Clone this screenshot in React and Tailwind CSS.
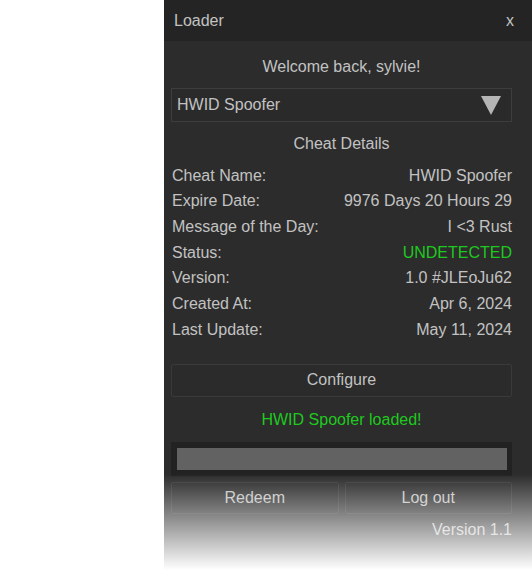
const rows = [
  { label: "Cheat Name:", value: "HWID Spoofer" },
  { label: "Expire Date:", value: "9976 Days 20 Hours 29" },
  { label: "Message of the Day:", value: "I <3 Rust" },
  { label: "Status:", value: "UNDETECTED", green: true },
  { label: "Version:", value: "1.0 #JLEoJu62" },
  { label: "Created At:", value: "Apr 6, 2024" },
  { label: "Last Update:", value: "May 11, 2024" },
];

const App = () => {
  return (
    <div
      className="w-full h-[570px] bg-white flex overflow-hidden text-[16px] text-[#c2c2c2]"
      style={{ fontFamily: '"Liberation Sans", Arial, sans-serif' }}
    >
      <div className="w-[164px] shrink-0" />
      <div className="flex-1 relative bg-[#2c2c2c] flex flex-col">
        {/* title bar */}
        <div className="h-[41px] bg-[#242424] flex items-center justify-between pl-[10px] pr-[18px]">
          <span>Loader</span>
          <span>x</span>
        </div>

        <div className="flex flex-col pl-[7px] pr-[20px]">
          <p className="mt-[16px] leading-[20px] text-center">Welcome back, sylvie!</p>

          <div className="mt-[11px] h-[34px] border border-[#3d3d3d] bg-[#2a2a2a] flex items-center justify-between pl-[5px] pr-[10px]">
            <span>HWID Spoofer</span>
            <svg width="20" height="19" viewBox="0 0 20 19">
              <polygon points="0,0 20,0 10,19" fill="#b5b5b5" />
            </svg>
          </div>

          <p className="mt-[12px] leading-[20px] text-center">Cheat Details</p>

          <div className="mt-[9px] flex flex-col pl-[1px]">
            {rows.map((row) => (
              <div key={row.label} className="h-[25.67px] flex items-center justify-between whitespace-nowrap">
                <span>{row.label}</span>
                <span className={row.green ? "text-[#1fc81f]" : ""}>{row.value}</span>
              </div>
            ))}
          </div>

          <button className="mt-[21px] h-[33px] border border-[#3a3a3a] bg-[#2b2b2b] rounded-[2px] text-[#c2c2c2]">
            Configure
          </button>

          <p className="mt-[13px] leading-[20px] text-center text-[#1fc81f]">HWID Spoofer loaded!</p>

          <div className="mt-[12px] h-[34px] bg-[#222222] pt-[6px] pb-[6px] pl-[6px] pr-[5px]">
            <div className="h-full bg-[#626262]" />
          </div>

          <div className="mt-[6px] flex gap-[6px]">
            <button className="flex-1 h-[32px] border border-[#3a3a3a] bg-[#2b2b2b] rounded-[2px] text-[#c2c2c2]">
              Redeem
            </button>
            <button className="flex-1 h-[32px] border border-[#3a3a3a] bg-[#2b2b2b] rounded-[2px] text-[#c2c2c2]">
              Log out
            </button>
          </div>

          <p className="mt-[6px] leading-[20px] text-right">Version 1.1</p>
        </div>

        {/* fade to white at the bottom */}
        <div className="absolute left-0 right-0 bottom-0 h-[96px] pointer-events-none bg-linear-to-b from-[#ffffff00] to-white" />
      </div>
    </div>
  );
};

export default App;
